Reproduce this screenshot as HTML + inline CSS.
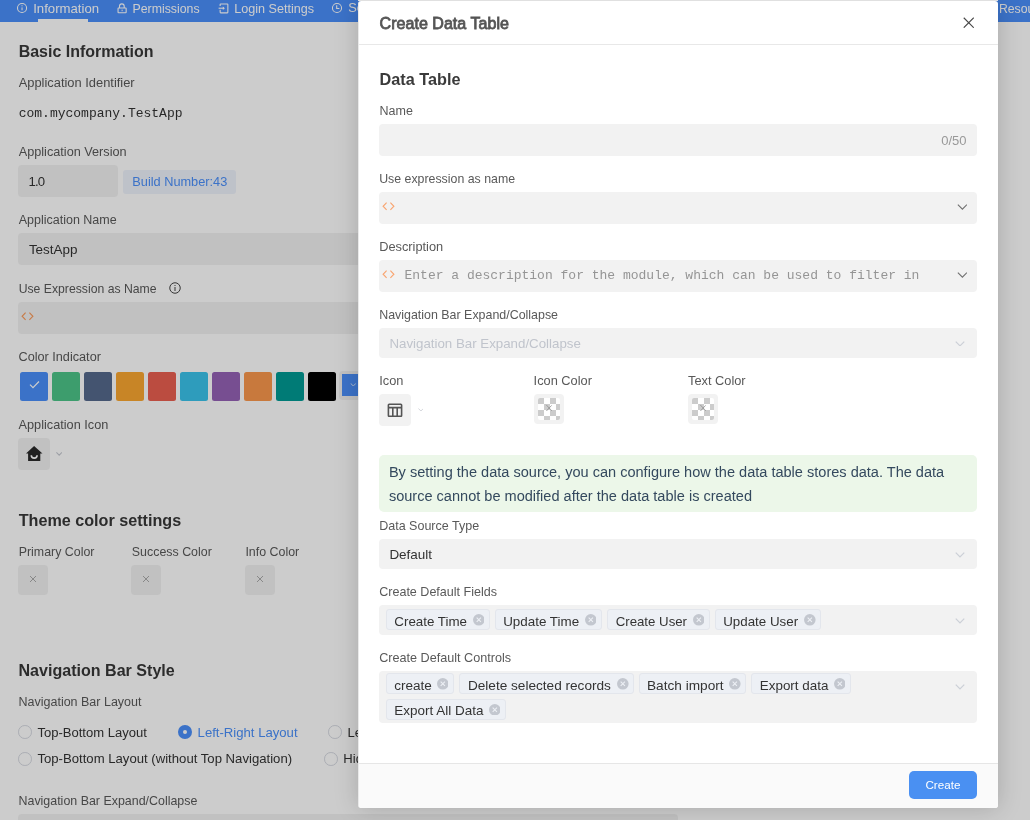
<!DOCTYPE html>
<html><head><meta charset="utf-8">
<style>
*{box-sizing:border-box;margin:0;padding:0}
html,body{width:1030px;height:820px;overflow:hidden;background:#fff;font-family:"Liberation Sans",sans-serif}
.t{position:absolute;white-space:nowrap;line-height:1}
.r{position:absolute}
#bg{position:absolute;left:0;top:0;width:1030px;height:820px;background:#fff;overflow:hidden}
#mask{position:absolute;left:0;top:0;width:1030px;height:820px;background:rgba(0,0,0,0.2)}
#modal{position:absolute;left:358px;top:1px;width:640px;height:807px;border-left:1px solid #e9e9e9;background:#fff;border-radius:3px;box-shadow:0 0 24px rgba(0,0,0,0.18)}
</style></head><body>
<div id="root" style="position:absolute;left:0;top:0;width:1030px;height:820px;will-change:transform"><div id="bg">
<div class="r" style="left:0px;top:0px;width:1030px;height:22px;background:#4a8ffa;border-radius:0px;"></div>
<div class="t" style="left:33.20px;top:1.93px;font-size:13.187px;color:#ffffff;font-weight:normal;font-family:'Liberation Sans',sans-serif;">Information</div>
<div class="t" style="left:132.50px;top:2.65px;font-size:12.342px;color:#ffffff;font-weight:normal;font-family:'Liberation Sans',sans-serif;">Permissions</div>
<div class="t" style="left:234.20px;top:3.12px;font-size:12.618px;color:#ffffff;font-weight:normal;font-family:'Liberation Sans',sans-serif;">Login Settings</div>
<div class="t" style="left:348.20px;top:2.26px;font-size:12.800px;color:#ffffff;font-weight:normal;font-family:'Liberation Sans',sans-serif;">Settings</div>
<div class="t" style="left:998.90px;top:2.69px;font-size:12.300px;color:#ffffff;font-weight:normal;font-family:'Liberation Sans',sans-serif;">Resources</div>
<div class="r" style="left:38px;top:19px;width:50px;height:3px;background:#fff;border-radius:0px;"></div>
<svg class="r" style="left:16px;top:1.85px" width="12" height="12" viewBox="0 0 12 12"><circle cx="6.05" cy="6" r="4.55" fill="none" stroke="#fff" stroke-width="1.05"/><rect x="5.5" y="5.4" width="1.05" height="2.9" fill="#fff"/><rect x="5.5" y="3.3" width="1.05" height="1" fill="#fff"/></svg>
<svg class="r" style="left:116.5px;top:2.5px" width="10" height="11" viewBox="0 0 10 11"><rect x="1.05" y="5.05" width="8.1" height="4.7" rx="0.5" fill="none" stroke="#fff" stroke-width="1.1"/><path d="M2.5 5V3.2a2.35 2.35 0 0 1 4.7 0V5" fill="none" stroke="#fff" stroke-width="1.1"/><rect x="4.6" y="6.6" width="1" height="1.6" fill="#fff"/></svg>
<svg class="r" style="left:217.5px;top:2.5px" width="11" height="11" viewBox="0 0 11 11"><path d="M2.15 3.1V1.5a0.55 0.55 0 0 1 0.55-0.55h6.6a0.55 0.55 0 0 1 0.55 0.55v7.8a0.55 0.55 0 0 1-0.55 0.55H2.7a0.55 0.55 0 0 1-0.55-0.55V6.8" fill="none" stroke="#fff" stroke-width="1.1"/><path d="M0.6 5.2h5.2" fill="none" stroke="#fff" stroke-width="1.1"/><path d="M4.8 3.5l2.1 1.7-2.1 1.7z" fill="#fff"/></svg>
<svg class="r" style="left:331px;top:1.85px" width="12" height="12" viewBox="0 0 12 12"><circle cx="6" cy="6" r="4.55" fill="none" stroke="#fff" stroke-width="1.05"/><path d="M5.7 3.3V6.5h2.7" fill="none" stroke="#fff" stroke-width="1.1"/></svg>
<div class="t" style="left:18.70px;top:43.96px;font-size:15.986px;color:#383838;font-weight:bold;font-family:'Liberation Sans',sans-serif;">Basic Information</div>
<div class="t" style="left:18.70px;top:77.29px;font-size:12.882px;color:#595959;font-weight:normal;font-family:'Liberation Sans',sans-serif;">Application Identifier</div>
<div class="t" style="left:18.70px;top:107.44px;font-size:13.000px;color:#333;font-weight:normal;font-family:'Liberation Mono',monospace;">com.mycompany.TestApp</div>
<div class="t" style="left:18.70px;top:146.25px;font-size:12.698px;color:#595959;font-weight:normal;font-family:'Liberation Sans',sans-serif;">Application Version</div>
<div class="r" style="left:18px;top:165px;width:100px;height:31.5px;background:#f2f2f2;border-radius:4px;"></div>
<div class="t" style="left:28.60px;top:175.12px;font-size:13.200px;color:#333;font-weight:normal;font-family:'Liberation Sans',sans-serif;letter-spacing:-0.9px">1.0</div>
<div class="r" style="left:123px;top:170px;width:112.5px;height:23.5px;background:#eef3fc;border-radius:3px;"></div>
<div class="t" style="left:132.30px;top:175.50px;font-size:12.752px;color:#4a8ffa;font-weight:normal;font-family:'Liberation Sans',sans-serif;">Build Number:43</div>
<div class="t" style="left:18.70px;top:213.72px;font-size:12.500px;color:#595959;font-weight:normal;font-family:'Liberation Sans',sans-serif;">Application Name</div>
<div class="r" style="left:18px;top:233px;width:660px;height:31.5px;background:#f2f2f2;border-radius:4px;"></div>
<div class="t" style="left:28.90px;top:243.02px;font-size:13.444px;color:#333;font-weight:normal;font-family:'Liberation Sans',sans-serif;">TestApp</div>
<div class="t" style="left:18.70px;top:282.85px;font-size:12.229px;color:#595959;font-weight:normal;font-family:'Liberation Sans',sans-serif;">Use Expression as Name</div>
<svg class="r" style="left:168.6px;top:282px" width="12" height="12" viewBox="0 0 12 12"><circle cx="6" cy="6" r="5.25" fill="none" stroke="#444" stroke-width="1"/><rect x="5.5" y="5" width="1" height="4" fill="#444"/><rect x="5.5" y="3" width="1" height="1" fill="#444"/></svg>
<div class="r" style="left:18px;top:302px;width:660px;height:31.5px;background:#f2f2f2;border-radius:4px;"></div>
<svg class="r" style="left:20.9px;top:312px" width="13" height="8.5" viewBox="0 0 13 8.5"><path d="M4.6 0.6L1.1 4.25l3.5 3.65M8.4 0.6l3.5 3.65-3.5 3.65" fill="none" stroke="#f99a5a" stroke-width="1.1"/></svg>
<div class="t" style="left:18.50px;top:351.26px;font-size:12.683px;color:#595959;font-weight:normal;font-family:'Liberation Sans',sans-serif;">Color Indicator</div>
<div class="r" style="left:19.8px;top:371.7px;width:28.4px;height:29px;background:#4a8ffa;border-radius:2.5px;box-shadow:0 0 0 1px rgba(255,255,255,0.35)"></div>
<div class="r" style="left:51.8px;top:371.7px;width:28.4px;height:29px;background:#4dc589;border-radius:2.5px;box-shadow:0 0 0 1px rgba(255,255,255,0.35)"></div>
<div class="r" style="left:83.8px;top:371.7px;width:28.4px;height:29px;background:#56698c;border-radius:2.5px;box-shadow:0 0 0 1px rgba(255,255,255,0.35)"></div>
<div class="r" style="left:115.8px;top:371.7px;width:28.4px;height:29px;background:#fba730;border-radius:2.5px;box-shadow:0 0 0 1px rgba(255,255,255,0.35)"></div>
<div class="r" style="left:147.8px;top:371.7px;width:28.4px;height:29px;background:#ea5f50;border-radius:2.5px;box-shadow:0 0 0 1px rgba(255,255,255,0.35)"></div>
<div class="r" style="left:179.8px;top:371.7px;width:28.4px;height:29px;background:#3ac3eb;border-radius:2.5px;box-shadow:0 0 0 1px rgba(255,255,255,0.35)"></div>
<div class="r" style="left:211.8px;top:371.7px;width:28.4px;height:29px;background:#9562b6;border-radius:2.5px;box-shadow:0 0 0 1px rgba(255,255,255,0.35)"></div>
<div class="r" style="left:243.8px;top:371.7px;width:28.4px;height:29px;background:#fb984d;border-radius:2.5px;box-shadow:0 0 0 1px rgba(255,255,255,0.35)"></div>
<div class="r" style="left:275.8px;top:371.7px;width:28.4px;height:29px;background:#009a94;border-radius:2.5px;box-shadow:0 0 0 1px rgba(255,255,255,0.35)"></div>
<div class="r" style="left:307.8px;top:371.7px;width:28.4px;height:29px;background:#000000;border-radius:2.5px;box-shadow:0 0 0 1px rgba(255,255,255,0.35)"></div>
<div class="r" style="left:339.2px;top:370.5px;width:40px;height:29px;background:#f2f2f2;border-radius:4px;"></div>
<div class="r" style="left:341.9px;top:374px;width:40px;height:22px;background:#4a8ffa;border-radius:0px;"></div>
<svg class="r" style="left:349.7px;top:382.5px" width="6.6" height="3.6" viewBox="0 0 10 6"><path d="M0.6 0.6L5 5 9.4 0.6" fill="none" stroke="#fff" stroke-width="1.3"/></svg>
<svg class="r" style="left:29px;top:379.5px" width="11" height="9" viewBox="0 0 11 9"><path d="M1 4.6l3 3L10 1.5" fill="none" stroke="#fff" stroke-width="1.2"/></svg>
<div class="t" style="left:18.50px;top:419.23px;font-size:12.720px;color:#595959;font-weight:normal;font-family:'Liberation Sans',sans-serif;">Application Icon</div>
<div class="r" style="left:18.3px;top:438.3px;width:31.4px;height:31.4px;background:#f2f2f2;border-radius:4px;"></div>
<svg class="r" style="left:26px;top:446px" width="16.5" height="15" viewBox="0 0 16.5 15"><path d="M8.1 0L0 7.6h2.1V15h12.2V7.6h2.2z" fill="#2a2a2a"/><path d="M5.3 9.2a2.9 2.9 0 0 0 5.8 0" fill="none" stroke="#fff" stroke-width="1.6"/></svg>
<svg class="r" style="left:56px;top:451.8px" width="6.4" height="3.8" viewBox="0 0 10 6"><path d="M0.6 0.6L5 5 9.4 0.6" fill="none" stroke="#c5c8d0" stroke-width="1.6"/></svg>
<div class="t" style="left:18.70px;top:511.91px;font-size:16.163px;color:#383838;font-weight:bold;font-family:'Liberation Sans',sans-serif;">Theme color settings</div>
<div class="t" style="left:18.70px;top:546.30px;font-size:12.406px;color:#595959;font-weight:normal;font-family:'Liberation Sans',sans-serif;">Primary Color</div>
<div class="t" style="left:131.80px;top:546.29px;font-size:12.413px;color:#595959;font-weight:normal;font-family:'Liberation Sans',sans-serif;">Success Color</div>
<div class="t" style="left:245.40px;top:546.29px;font-size:12.411px;color:#595959;font-weight:normal;font-family:'Liberation Sans',sans-serif;">Info Color</div>
<div class="r" style="left:18.2px;top:565.2px;width:29.8px;height:29.8px;background:#f2f2f2;border-radius:4px;"></div>
<svg class="r" style="left:29.2px;top:575.2px" width="8" height="8" viewBox="0 0 8 8"><path d="M1 1l6 6M7 1L1 7" fill="none" stroke="#aaa" stroke-width="1"/></svg>
<div class="r" style="left:131.2px;top:565.2px;width:29.8px;height:29.8px;background:#f2f2f2;border-radius:4px;"></div>
<svg class="r" style="left:142.2px;top:575.2px" width="8" height="8" viewBox="0 0 8 8"><path d="M1 1l6 6M7 1L1 7" fill="none" stroke="#aaa" stroke-width="1"/></svg>
<div class="r" style="left:245.4px;top:565.2px;width:29.8px;height:29.8px;background:#f2f2f2;border-radius:4px;"></div>
<svg class="r" style="left:256.4px;top:575.2px" width="8" height="8" viewBox="0 0 8 8"><path d="M1 1l6 6M7 1L1 7" fill="none" stroke="#aaa" stroke-width="1"/></svg>
<div class="t" style="left:18.50px;top:661.59px;font-size:16.072px;color:#383838;font-weight:bold;font-family:'Liberation Sans',sans-serif;">Navigation Bar Style</div>
<div class="t" style="left:18.50px;top:696.22px;font-size:12.500px;color:#595959;font-weight:normal;font-family:'Liberation Sans',sans-serif;">Navigation Bar Layout</div>
<div class="r" style="left:18.2px;top:725px;width:13.7px;height:13.7px;border-radius:50%;border:1px solid #d6d9e1;background:#fff"></div>
<div class="t" style="left:37.40px;top:726.24px;font-size:13.067px;color:#333;font-weight:normal;font-family:'Liberation Sans',sans-serif;">Top-Bottom Layout</div>
<div class="r" style="left:178px;top:725.2px;width:13.8px;height:13.8px;border-radius:50%;background:#4a8ffa"><div style="position:absolute;left:4.8px;top:4.8px;width:4.2px;height:4.2px;border-radius:50%;background:#fff"></div></div>
<div class="t" style="left:197.60px;top:726.18px;font-size:13.132px;color:#4a8ffa;font-weight:normal;font-family:'Liberation Sans',sans-serif;">Left-Right Layout</div>
<div class="r" style="left:328.4px;top:725.4px;width:13.7px;height:13.7px;border-radius:50%;border:1px solid #d6d9e1;background:#fff"></div>
<div class="t" style="left:347.40px;top:726.21px;font-size:13.100px;color:#333;font-weight:normal;font-family:'Liberation Sans',sans-serif;">Left Layout</div>
<div class="r" style="left:18.2px;top:752px;width:13.7px;height:13.7px;border-radius:50%;border:1px solid #d6d9e1;background:#fff"></div>
<div class="t" style="left:37.40px;top:752.16px;font-size:13.158px;color:#333;font-weight:normal;font-family:'Liberation Sans',sans-serif;">Top-Bottom Layout (without Top Navigation)</div>
<div class="r" style="left:324.3px;top:752px;width:13.7px;height:13.7px;border-radius:50%;border:1px solid #d6d9e1;background:#fff"></div>
<div class="t" style="left:343.30px;top:752.21px;font-size:13.100px;color:#333;font-weight:normal;font-family:'Liberation Sans',sans-serif;">Hidden</div>
<div class="t" style="left:18.50px;top:794.78px;font-size:12.431px;color:#595959;font-weight:normal;font-family:'Liberation Sans',sans-serif;">Navigation Bar Expand/Collapse</div>
<div class="r" style="left:18px;top:814px;width:660px;height:31.5px;background:#f2f2f2;border-radius:4px;"></div>
</div>
<div id="mask"></div>
<div id="modal"></div>
<div class="r" style="left:358px;top:0px;width:640px;height:1px;background:#e0e0e0;border-radius:0px;"></div>
<div class="t" style="left:379.60px;top:15.38px;font-size:16.082px;color:#555;font-weight:normal;font-family:'Liberation Sans',sans-serif;-webkit-text-stroke:0.8px #555">Create Data Table</div>
<svg class="r" style="left:962.8px;top:16.7px" width="11.5" height="11.5" viewBox="0 0 11.5 11.5"><path d="M0.75 0.75l10 10M10.75 0.75l-10 10" fill="none" stroke="#484848" stroke-width="1.1"/></svg>
<div class="r" style="left:359px;top:44px;width:639px;height:1px;background:#e8e8e8;border-radius:0px;"></div>
<div class="t" style="left:379.60px;top:71.04px;font-size:16.249px;color:#3a3a3a;font-weight:bold;font-family:'Liberation Sans',sans-serif;">Data Table</div>
<div class="t" style="left:379.60px;top:104.72px;font-size:12.500px;color:#595959;font-weight:normal;font-family:'Liberation Sans',sans-serif;">Name</div>
<div class="r" style="left:379.2px;top:124px;width:597.8px;height:31.8px;background:#f2f2f2;border-radius:4px;"></div>
<div class="t" style="left:941.20px;top:134.29px;font-size:13.008px;color:#999;font-weight:normal;font-family:'Liberation Sans',sans-serif;">0/50</div>
<div class="t" style="left:379.20px;top:172.84px;font-size:12.358px;color:#595959;font-weight:normal;font-family:'Liberation Sans',sans-serif;">Use expression as name</div>
<div class="r" style="left:379.2px;top:192px;width:597.8px;height:31.6px;background:#f2f2f2;border-radius:4px;"></div>
<svg class="r" style="left:382.3px;top:202.1px" width="13" height="8.5" viewBox="0 0 13 8.5"><path d="M4.6 0.6L1.1 4.25l3.5 3.65M8.4 0.6l3.5 3.65-3.5 3.65" fill="none" stroke="#f9a46f" stroke-width="1.1"/></svg>
<svg class="r" style="left:956.6px;top:203.5px" width="10.8" height="6.2" viewBox="0 0 10 6"><path d="M0.6 0.6L5 5 9.4 0.6" fill="none" stroke="#707070" stroke-width="1.05"/></svg>
<div class="t" style="left:379.20px;top:241.26px;font-size:12.800px;color:#595959;font-weight:normal;font-family:'Liberation Sans',sans-serif;">Description</div>
<div class="r" style="left:379.2px;top:260px;width:597.8px;height:31.6px;background:#f2f2f2;border-radius:4px;"></div>
<svg class="r" style="left:382.3px;top:270.1px" width="13" height="8.5" viewBox="0 0 13 8.5"><path d="M4.6 0.6L1.1 4.25l3.5 3.65M8.4 0.6l3.5 3.65-3.5 3.65" fill="none" stroke="#f9a46f" stroke-width="1.1"/></svg>
<div class="t" style="left:404.50px;top:268.74px;font-size:13.000px;color:#959595;font-weight:normal;font-family:'Liberation Mono',monospace;">Enter a description for the module, which can be used to filter in</div>
<svg class="r" style="left:956.6px;top:271.6px" width="10.8" height="6.2" viewBox="0 0 10 6"><path d="M0.6 0.6L5 5 9.4 0.6" fill="none" stroke="#707070" stroke-width="1.05"/></svg>
<div class="t" style="left:379.20px;top:308.88px;font-size:12.431px;color:#595959;font-weight:normal;font-family:'Liberation Sans',sans-serif;">Navigation Bar Expand/Collapse</div>
<div class="r" style="left:379.2px;top:328.2px;width:597.8px;height:29.6px;background:#f2f2f2;border-radius:4px;"></div>
<div class="t" style="left:389.40px;top:336.73px;font-size:13.306px;color:#c0c4cc;font-weight:normal;font-family:'Liberation Sans',sans-serif;">Navigation Bar Expand/Collapse</div>
<svg class="r" style="left:954.9px;top:340.7px" width="10" height="5.8" viewBox="0 0 10 6"><path d="M0.6 0.6L5 5 9.4 0.6" fill="none" stroke="#ccd0d7" stroke-width="1.3"/></svg>
<div class="t" style="left:379.20px;top:374.56px;font-size:12.800px;color:#595959;font-weight:normal;font-family:'Liberation Sans',sans-serif;">Icon</div>
<div class="t" style="left:533.60px;top:374.56px;font-size:12.800px;color:#595959;font-weight:normal;font-family:'Liberation Sans',sans-serif;">Icon Color</div>
<div class="t" style="left:688.00px;top:374.56px;font-size:12.800px;color:#595959;font-weight:normal;font-family:'Liberation Sans',sans-serif;">Text Color</div>
<div class="r" style="left:379.2px;top:394.2px;width:31.6px;height:31.5px;background:#f2f2f2;border-radius:4px;"></div>
<svg class="r" style="left:387px;top:402.5px" width="16" height="14.5" viewBox="0 0 16 14.5"><rect x="1.4" y="1.2" width="13.2" height="12.1" rx="0.8" fill="none" stroke="#555" stroke-width="1.6"/><path d="M1.4 4.6h13.2M5.8 4.6v8.7M10.2 4.6v8.7" fill="none" stroke="#555" stroke-width="1.6"/></svg>
<svg class="r" style="left:417.6px;top:408px" width="5.8" height="3.7" viewBox="0 0 10 6"><path d="M0.6 0.6L5 5 9.4 0.6" fill="none" stroke="#c5c8d0" stroke-width="1.3"/></svg>
<div class="r" style="left:534px;top:394.2px;width:29.7px;height:29.6px;background:#f2f2f2;border-radius:4px"></div><svg class="r" style="left:538px;top:398px" width="22" height="22" viewBox="0 0 22 22"><defs><clipPath id="cp1"><rect x="0" y="0" width="22" height="22" rx="2"/></clipPath></defs><g clip-path="url(#cp1)"><rect width="22" height="22" fill="#fff"/><path d="M0 0h6v6H0zM12 0h6v6h-6zM6 6h6v6H6zM18 6h6v6h-6zM0 12h6v6H0zM12 12h6v6h-6zM6 18h6v6H6zM18 18h6v6h-6z" fill="#cccccc"/></g><path d="M8.2 6.8l5.6 6M13.6 7.4L8.4 13" stroke="#8a8a8a" stroke-width="0.75" fill="none"/></svg>
<div class="r" style="left:688.2px;top:394.2px;width:29.7px;height:29.6px;background:#f2f2f2;border-radius:4px"></div><svg class="r" style="left:692.2px;top:398px" width="22" height="22" viewBox="0 0 22 22"><defs><clipPath id="cp2"><rect x="0" y="0" width="22" height="22" rx="2"/></clipPath></defs><g clip-path="url(#cp2)"><rect width="22" height="22" fill="#fff"/><path d="M0 0h6v6H0zM12 0h6v6h-6zM6 6h6v6H6zM18 6h6v6h-6zM0 12h6v6H0zM12 12h6v6h-6zM6 18h6v6H6zM18 18h6v6h-6z" fill="#cccccc"/></g><path d="M8.2 6.8l5.6 6M13.6 7.4L8.4 13" stroke="#8a8a8a" stroke-width="0.75" fill="none"/></svg>
<div class="r" style="left:379.2px;top:455px;width:597.8px;height:57.3px;background:#ecf7e9;border-radius:5px;"></div>
<div class="t" style="left:388.90px;top:465.27px;font-size:14.565px;color:#34495e;font-weight:normal;font-family:'Liberation Sans',sans-serif;">By setting the data source, you can configure how the data table stores data. The data</div>
<div class="t" style="left:388.90px;top:489.38px;font-size:14.550px;color:#34495e;font-weight:normal;font-family:'Liberation Sans',sans-serif;">source cannot be modified after the data table is created</div>
<div class="t" style="left:379.20px;top:519.70px;font-size:12.523px;color:#595959;font-weight:normal;font-family:'Liberation Sans',sans-serif;">Data Source Type</div>
<div class="r" style="left:379.2px;top:539px;width:597.8px;height:29.6px;background:#f2f2f2;border-radius:4px;"></div>
<div class="t" style="left:389.40px;top:547.59px;font-size:13.470px;color:#333;font-weight:normal;font-family:'Liberation Sans',sans-serif;">Default</div>
<svg class="r" style="left:954.9px;top:552.3px" width="10" height="5.8" viewBox="0 0 10 6"><path d="M0.6 0.6L5 5 9.4 0.6" fill="none" stroke="#ccd0d7" stroke-width="1.3"/></svg>
<div class="t" style="left:379.20px;top:586.37px;font-size:12.560px;color:#595959;font-weight:normal;font-family:'Liberation Sans',sans-serif;">Create Default Fields</div>
<div class="r" style="left:379.2px;top:605.2px;width:597.8px;height:29.7px;background:#f2f2f2;border-radius:4px;"></div>
<div class="r" style="left:386.1px;top:609.3000000000001px;width:103.89999999999998px;height:21px;background:#edf0f5;border:1px solid #e3e6ec;border-radius:3px"></div>
<div class="t" style="left:394.30px;top:614.80px;font-size:13.352px;color:#333;font-weight:normal;font-family:'Liberation Sans',sans-serif;">Create Time</div>
<svg class="r" style="left:472.59999999999997px;top:614.1px" width="11.6" height="11.6" viewBox="0 0 12 12"><circle cx="6" cy="6" r="6" fill="#c3c7cf"/><path d="M3.8 3.8l4.4 4.4M8.2 3.8L3.8 8.2" stroke="#edf0f5" stroke-width="1.1"/></svg>
<div class="r" style="left:494.8px;top:609.3000000000001px;width:107.30000000000001px;height:21px;background:#edf0f5;border:1px solid #e3e6ec;border-radius:3px"></div>
<div class="t" style="left:503.20px;top:614.75px;font-size:13.404px;color:#333;font-weight:normal;font-family:'Liberation Sans',sans-serif;">Update Time</div>
<svg class="r" style="left:584.6px;top:614.1px" width="11.6" height="11.6" viewBox="0 0 12 12"><circle cx="6" cy="6" r="6" fill="#c3c7cf"/><path d="M3.8 3.8l4.4 4.4M8.2 3.8L3.8 8.2" stroke="#edf0f5" stroke-width="1.1"/></svg>
<div class="r" style="left:607.2px;top:609.3000000000001px;width:103.0px;height:21px;background:#edf0f5;border:1px solid #e3e6ec;border-radius:3px"></div>
<div class="t" style="left:615.70px;top:614.88px;font-size:13.247px;color:#333;font-weight:normal;font-family:'Liberation Sans',sans-serif;">Create User</div>
<svg class="r" style="left:692.9000000000001px;top:614.1px" width="11.6" height="11.6" viewBox="0 0 12 12"><circle cx="6" cy="6" r="6" fill="#c3c7cf"/><path d="M3.8 3.8l4.4 4.4M8.2 3.8L3.8 8.2" stroke="#edf0f5" stroke-width="1.1"/></svg>
<div class="r" style="left:715.3000000000001px;top:609.3000000000001px;width:106.0px;height:21px;background:#edf0f5;border:1px solid #e3e6ec;border-radius:3px"></div>
<div class="t" style="left:723.20px;top:614.79px;font-size:13.357px;color:#333;font-weight:normal;font-family:'Liberation Sans',sans-serif;">Update User</div>
<svg class="r" style="left:804.2px;top:614.1px" width="11.6" height="11.6" viewBox="0 0 12 12"><circle cx="6" cy="6" r="6" fill="#c3c7cf"/><path d="M3.8 3.8l4.4 4.4M8.2 3.8L3.8 8.2" stroke="#edf0f5" stroke-width="1.1"/></svg>
<svg class="r" style="left:954.9px;top:618.2px" width="10" height="5.8" viewBox="0 0 10 6"><path d="M0.6 0.6L5 5 9.4 0.6" fill="none" stroke="#ccd0d7" stroke-width="1.3"/></svg>
<div class="t" style="left:379.20px;top:651.60px;font-size:12.632px;color:#595959;font-weight:normal;font-family:'Liberation Sans',sans-serif;">Create Default Controls</div>
<div class="r" style="left:379.2px;top:671.3px;width:597.8px;height:51.4px;background:#f2f2f2;border-radius:4px;"></div>
<div class="r" style="left:386.1px;top:673.4000000000001px;width:68.0px;height:21px;background:#edf0f5;border:1px solid #e3e6ec;border-radius:3px"></div>
<div class="t" style="left:394.30px;top:678.75px;font-size:13.525px;color:#333;font-weight:normal;font-family:'Liberation Sans',sans-serif;">create</div>
<svg class="r" style="left:436.9px;top:678.2px" width="11.6" height="11.6" viewBox="0 0 12 12"><circle cx="6" cy="6" r="6" fill="#c3c7cf"/><path d="M3.8 3.8l4.4 4.4M8.2 3.8L3.8 8.2" stroke="#edf0f5" stroke-width="1.1"/></svg>
<div class="r" style="left:459.40000000000003px;top:673.4000000000001px;width:174.49999999999994px;height:21px;background:#edf0f5;border:1px solid #e3e6ec;border-radius:3px"></div>
<div class="t" style="left:467.90px;top:678.67px;font-size:13.613px;color:#333;font-weight:normal;font-family:'Liberation Sans',sans-serif;">Delete selected records</div>
<svg class="r" style="left:617.0px;top:678.2px" width="11.6" height="11.6" viewBox="0 0 12 12"><circle cx="6" cy="6" r="6" fill="#c3c7cf"/><path d="M3.8 3.8l4.4 4.4M8.2 3.8L3.8 8.2" stroke="#edf0f5" stroke-width="1.1"/></svg>
<div class="r" style="left:639.2px;top:673.4000000000001px;width:106.89999999999998px;height:21px;background:#edf0f5;border:1px solid #e3e6ec;border-radius:3px"></div>
<div class="t" style="left:647.00px;top:678.63px;font-size:13.660px;color:#333;font-weight:normal;font-family:'Liberation Sans',sans-serif;">Batch import</div>
<svg class="r" style="left:729.0px;top:678.2px" width="11.6" height="11.6" viewBox="0 0 12 12"><circle cx="6" cy="6" r="6" fill="#c3c7cf"/><path d="M3.8 3.8l4.4 4.4M8.2 3.8L3.8 8.2" stroke="#edf0f5" stroke-width="1.1"/></svg>
<div class="r" style="left:751.1px;top:673.4000000000001px;width:100.0px;height:21px;background:#edf0f5;border:1px solid #e3e6ec;border-radius:3px"></div>
<div class="t" style="left:759.80px;top:678.84px;font-size:13.418px;color:#333;font-weight:normal;font-family:'Liberation Sans',sans-serif;">Export data</div>
<svg class="r" style="left:833.8000000000001px;top:678.2px" width="11.6" height="11.6" viewBox="0 0 12 12"><circle cx="6" cy="6" r="6" fill="#c3c7cf"/><path d="M3.8 3.8l4.4 4.4M8.2 3.8L3.8 8.2" stroke="#edf0f5" stroke-width="1.1"/></svg>
<div class="r" style="left:386.1px;top:699.1px;width:119.89999999999998px;height:21px;background:#edf0f5;border:1px solid #e3e6ec;border-radius:3px"></div>
<div class="t" style="left:394.30px;top:704.48px;font-size:13.489px;color:#333;font-weight:normal;font-family:'Liberation Sans',sans-serif;">Export All Data</div>
<svg class="r" style="left:488.59999999999997px;top:703.9px" width="11.6" height="11.6" viewBox="0 0 12 12"><circle cx="6" cy="6" r="6" fill="#c3c7cf"/><path d="M3.8 3.8l4.4 4.4M8.2 3.8L3.8 8.2" stroke="#edf0f5" stroke-width="1.1"/></svg>
<svg class="r" style="left:954.9px;top:684.2px" width="10" height="5.8" viewBox="0 0 10 6"><path d="M0.6 0.6L5 5 9.4 0.6" fill="none" stroke="#ccd0d7" stroke-width="1.3"/></svg>
<div class="r" style="left:359px;top:763px;width:639px;height:45px;background:#fafafa;border-radius:0px;border-top:1px solid #e6e6e6;border-radius:0 0 3px 3px"></div>
<div class="r" style="left:909.1px;top:770.9px;width:67.7px;height:27.9px;background:#4a90f2;border-radius:5px;"></div>
<div class="t" style="left:925.40px;top:778.92px;font-size:11.667px;color:#fff;font-weight:normal;font-family:'Liberation Sans',sans-serif;">Create</div>
</div></body></html>
